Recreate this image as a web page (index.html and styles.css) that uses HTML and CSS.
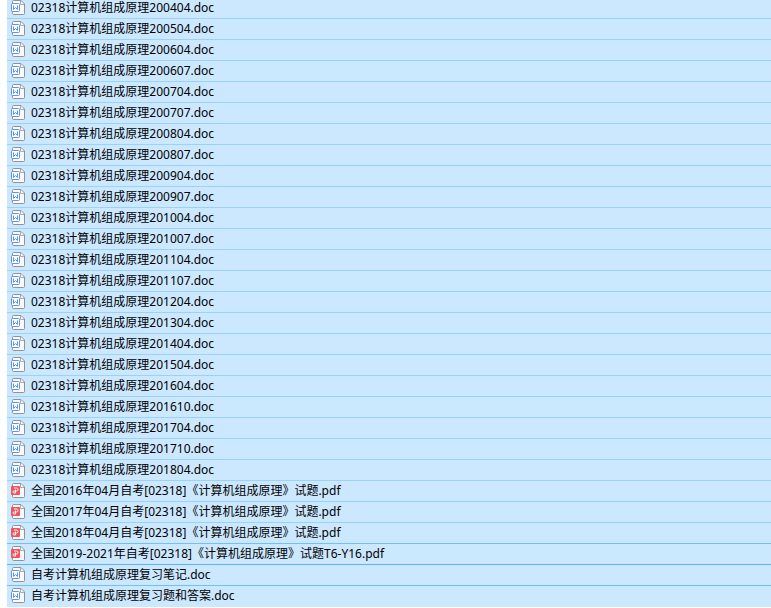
FILE: index.html
```html
<!DOCTYPE html>
<html lang="zh-CN">
<head>
    <meta charset="UTF-8">
    <meta name="viewport" content="width=device-width, initial-scale=1.0">
    <title>计算机组成原理</title>
    <link rel="stylesheet" href="styles.css">
</head>
<body>
    <svg class="icon-defs" aria-hidden="true">
        <symbol id="page" viewBox="0 0 16 16">
            <path d="M3.500 .5h7.500l3.500 3.500v9.500a1 1 0 0 1-1 1h-10a1 1 0 0 1-1-1v-12a1 1 0 0 1 1-1z" fill="#fafafa" stroke="#909296"/>
            <path d="M10.500 1v3.500h3.500" fill="none" stroke="#a9abae"/>
        </symbol>
        <symbol id="doc" viewBox="0 0 16 16">
            <use href="#page"/>
            <rect x="1.500" y="3.500" width="8" height="8" rx="1" fill="#fff" stroke="#5e93f5"/>
            <path d="M3.500 5.500v4l2-2 2 2v-4" fill="none" stroke="#5e93f5"/>
        </symbol>
        <symbol id="pdf" viewBox="0 0 16 16">
            <use href="#page"/>
            <rect x="1" y="3" width="9" height="9" rx="1" fill="#ee5560"/>
            <path d="M4 5h2.500a1.500 1.500 0 0 1 0 3h-2.500a1 1 0 0 0 0 2h1.500v-3.500" fill="none" stroke="#fff" stroke-width=".9"/>
        </symbol>
    </svg>

    <ul class="file-list" id="fileList"></ul>

    <script src="files.js"></script>
</body>
</html>
```
FILE: styles.css
```css
body {
    margin: 0;
    background-color: #fff;
    color: #000;
    font-family: "Noto Sans", "Noto Sans CJK SC", sans-serif;
    font-size: 12px;
    overflow: hidden;
}

.icon-defs {
    display: none;
}

/* the list is scrolled a little, so the first row is cut at the top */
.file-list {
    list-style: none;
    margin: -2px 0 0 7px;
    padding: 0;
}

.file {
    display: flex;
    align-items: center;
    gap: 5px;
    height: 20px;
    padding-left: 3px;
    background-color: #cce8ff;
    border-bottom: 1px solid #99d1ff;
    line-height: 20px;
    white-space: nowrap;
}

.file:last-child {
    border-bottom-color: #cce8ff;
}

.file.before-focus,
.file.after-focus {
    border-bottom-color: #70c0ff;
}

.file.focused {
    border-bottom-color: #5cb3ff;
}

.file-icon {
    flex: none;
    width: 16px;
    height: 16px;
}
```
FILE: files.js
```javascript
const exams = [
    "200404", "200504", "200604", "200607", "200704", "200707", "200804", "200807",
    "200904", "200907", "201004", "201007", "201104", "201107", "201204", "201304",
    "201404", "201504", "201604", "201610", "201704", "201710", "201804"
];

const files = exams.map(exam => ({ name: "02318计算机组成原理" + exam + ".doc" }));

files.push(
    { name: "全国2016年04月自考[02318]《计算机组成原理》试题.pdf" },
    { name: "全国2017年04月自考[02318]《计算机组成原理》试题.pdf" },
    { name: "全国2018年04月自考[02318]《计算机组成原理》试题.pdf", state: "before-focus" },
    { name: "全国2019-2021年自考[02318]《计算机组成原理》试题T6-Y16.pdf", state: "focused" },
    { name: "自考计算机组成原理复习笔记.doc", state: "after-focus" },
    { name: "自考计算机组成原理复习题和答案.doc" }
);

const list = document.getElementById("fileList");

for (let file of files) {
    const type = file.name.split(".").pop();
    const row = document.createElement("li");
    row.className = "file " + (file.state || "");
    row.innerHTML = `<svg class="file-icon" aria-hidden="true"><use href="#${type}"/></svg><span>${file.name}</span>`;
    list.appendChild(row);
}
```
